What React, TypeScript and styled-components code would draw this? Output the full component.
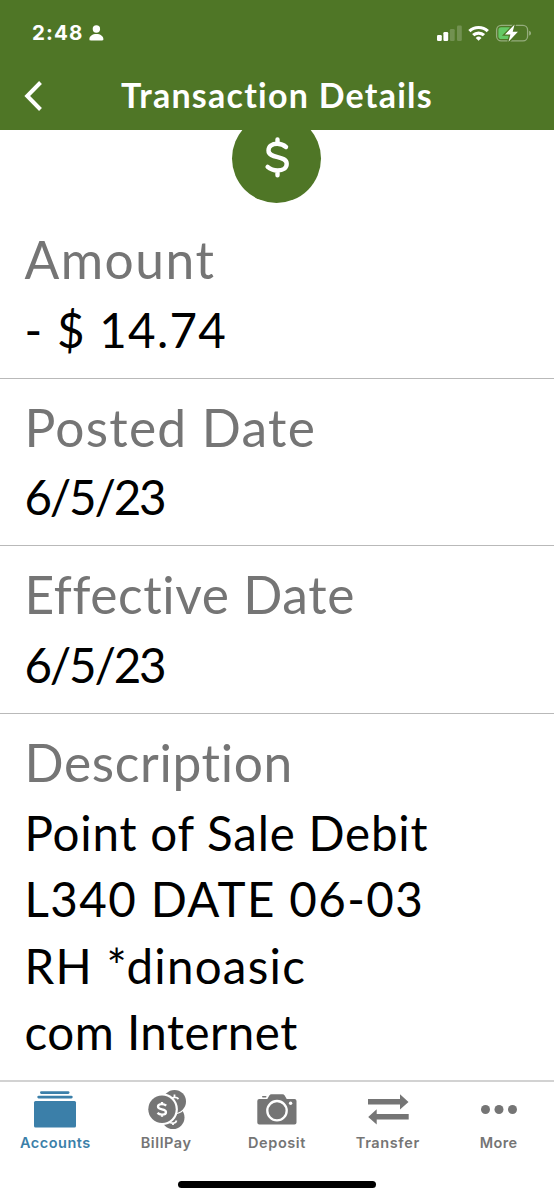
import React from "react";
import styled, { createGlobalStyle } from "styled-components";

const GREEN = "#4f7626";
const BLUE = "#3b7fa9";
const GREY = "#757575";

const GlobalStyle = createGlobalStyle`
  * { box-sizing: border-box; }
  body { margin: 0; background: #fff; }
`;

const Screen = styled.div`
  display: flex;
  flex-direction: column;
  width: 554px;
  height: 1200px;
  overflow: hidden;
  background: #fff;
  font-family: Lato, "Noto Sans", sans-serif;
`;

const Header = styled.header`
  flex: none;
  height: 130px;
  background: ${GREEN};
  color: #fff;
`;

const StatusBar = styled.div`
  display: flex;
  justify-content: space-between;
  align-items: center;
  height: 66px;
  padding: 0 23px 0 32px;
`;

const StatusGroup = styled.div`
  display: flex;
  align-items: center;
`;

const Clock = styled.span`
  width: 57px;
  font: 700 20.5px/24px Inter, sans-serif;
  letter-spacing: 1.1px;
`;

const TitleBar = styled.div`
  display: grid;
  grid-template-columns: 60px 1fr 60px;
  align-items: center;
  height: 57px;
`;

const BackButton = styled.button`
  display: flex;
  padding: 3px 0 0 24px;
  border: 0;
  background: none;
`;

const Title = styled.h1<{ $spacing: number }>`
  margin: 0;
  text-align: center;
  font-size: 34px;
  line-height: 57px;
  font-weight: 700;
  letter-spacing: ${(p) => p.$spacing}px;
  white-space: nowrap;
`;

const Hero = styled.div`
  flex: none;
  display: flex;
  justify-content: center;
  height: 81px;
  overflow: hidden;
`;

const Badge = styled.div`
  display: flex;
  align-items: center;
  justify-content: center;
  width: 89px;
  height: 89px;
  margin: -16.5px 1px 0 0;
  border-radius: 50%;
  background: ${GREEN};
`;

const Details = styled.main`
  flex: 1;
  min-height: 0;
`;

const Row = styled.section`
  height: 167.7px;
  padding: 15px 26px 0 24.5px;
  border-bottom: 1px solid #b9b9b9;
  &:last-child { height: auto; border: 0; }
`;

const Label = styled.div<{ $spacing: number }>`
  height: 70.7px;
  font-size: 51.5px;
  line-height: 66px;
  letter-spacing: ${(p) => p.$spacing}px;
  color: ${GREY};
  white-space: nowrap;
`;

const Value = styled.div<{ $spacing: number }>`
  font-size: 47.5px;
  line-height: 66.5px;
  letter-spacing: ${(p) => p.$spacing}px;
  color: #000;
  white-space: nowrap;
`;

const TabBar = styled.nav`
  flex: none;
  display: grid;
  grid-template-columns: repeat(5, 1fr);
  height: 101px;
  border-top: 2px solid #d2d2d2;
`;

const Tab = styled.a<{ $active?: boolean }>`
  display: flex;
  flex-direction: column;
  align-items: center;
  padding-top: 6px;
  color: ${(p) => (p.$active ? BLUE : GREY)};
  font: 600 14.5px/20px Inter, sans-serif;
`;

const TabLabel = styled.span<{ $spacing: number }>`
  margin-top: 3px;
  letter-spacing: ${(p) => p.$spacing}px;
`;

const HomeArea = styled.div`
  flex: none;
  display: flex;
  justify-content: center;
  height: 19px;
`;

const HomeIndicator = styled.div`
  width: 198px;
  height: 7px;
  border-radius: 4px;
  background: #000;
`;

const rows = [
  { label: "Amount", spacing: 1.5, lines: [{ text: "- $ 14.74", spacing: 1.3 }] },
  { label: "Posted Date", spacing: 1.25, lines: [{ text: "6/5/23", spacing: -2.2 }] },
  { label: "Effective Date", spacing: 0.6, lines: [{ text: "6/5/23", spacing: -2.2 }] },
  {
    label: "Description",
    spacing: 0.65,
    lines: [
      { text: "Point of Sale Debit", spacing: 0.8 },
      { text: "L340 DATE 06-03", spacing: 1.4 },
      { text: "RH *dinoasic", spacing: 1.25 },
      { text: "com Internet", spacing: 0.5 },
    ],
  },
];

const PersonIcon = () => (
  <svg width="15" height="16" viewBox="0 0 15 16" fill="#fff">
    <circle cx="7.4" cy="4" r="3.7" />
    <path d="M0.4 14.2C0.4 11 3.5 9 7.4 9s7 2 7 5.2c0 .8-.5 1.2-1.3 1.2H1.7c-.8 0-1.3-.4-1.3-1.2z" />
  </svg>
);

const StatusIcons = () => (
  <svg width="96" height="20" viewBox="435 23 96 20" fill="#fff">
    <rect x="437" y="35" width="4.8" height="6" rx="1.2" />
    <rect x="443.4" y="32" width="4.8" height="9" rx="1.2" />
    <rect x="449.9" y="29" width="4.8" height="12" rx="1.2" opacity=".2" />
    <rect x="457" y="25.5" width="4.8" height="15.5" rx="1.2" opacity=".2" />
    <g fill="none" stroke="#fff" strokeWidth="3.2">
      <path d="M469.4 31.2a13.3 13.3 0 0 1 18.4 0" />
      <path d="M473.2 35.200a7.800 7.800 0 0 1 10.800 0" />
    </g>
    <path d="M478.6 40.8l-2.9-2.9a4.2 4.2 0 0 1 5.8 0z" />
    <rect x="496.6" y="25.3" width="31" height="15.6" rx="4.6" fill="none" stroke="#fff" strokeOpacity=".4" strokeWidth="1.3" />
    <path d="M529.2 30.8c2.3.8 2.3 3.9 0 4.7z" opacity=".45" />
    <rect x="498.4" y="27.2" width="13" height="11.8" rx="2.8" fill="#64c864" />
    <path d="M514.6 24.6l-9.6 9.8h5.4l-1.9 7.4 9.4-10h-5.2z" stroke={GREEN} strokeWidth="2.6" paintOrder="stroke" />
  </svg>
);

const DollarIcon = () => (
  <svg width="26" height="44" viewBox="264.500 136.500 26 44" fill="none" stroke="#fff" strokeWidth="4.400" strokeLinecap="round">
    <path d="M286.500 147.500c-2.400-2.100-5.200-3.200-8.700-3.200-5.400 0-8.800 2.500-8.800 6.700 0 9 18.200 4.400 18.200 13.300 0 4.300-3.700 6.700-9.200 6.700-4 0-7.200-1.200-9.900-3.600M278 140v4M278 172v3.800" />
  </svg>
);

const AccountsIcon = () => (
  <svg width="44" height="42" viewBox="33 1088 44 42" fill="currentColor">
    <rect x="40" y="1091.2" width="29.5" height="2.7" rx="1.3" />
    <rect x="37.3" y="1095.7" width="35.4" height="2.7" rx="1.3" />
    <rect x="34" y="1101" width="42" height="26.6" rx="1.5" />
  </svg>
);

const BillPayIcon = () => (
  <svg width="44" height="42" viewBox="144 1088 44 42" fill="currentColor">
    <circle cx="173" cy="1117.5" r="11.5" />
    <path d="M170 1122.5c3 1.500 6 .5 6.500-2M173 1123v2" stroke="#fff" strokeWidth="1.8" fill="none" />
    <circle cx="174.5" cy="1101.5" r="11.5" stroke="#fff" strokeWidth="2.4" paintOrder="stroke" />
    <path d="M178.500 1099c-2-2-5-2-6.500-.5M174.500 1094.500v2.500" stroke="#fff" strokeWidth="1.8" fill="none" />
    <circle cx="162" cy="1109.2" r="13.7" stroke="#fff" strokeWidth="4.4" paintOrder="stroke" />
    <path d="M166.200 1105.700c-1.200-1.100-2.700-1.600-4.300-1.600-2.300 0-3.900 1-3.900 2.600 0 3.500 8 1.600 8 5.200 0 1.700-1.700 2.700-4.100 2.700-1.700 0-3.300-.6-4.400-1.700M162 1102v2M162 1114.500v2.300" stroke="#fff" strokeWidth="2.3" fill="none" />
  </svg>
);

const CameraIcon = () => (
  <svg width="44" height="42" viewBox="255 1088 44 42" fill="currentColor">
    <path d="M257.300 1101q0-2 2-2h8l2-3.500q.8-1.300 2.200-1.300h11q1.400 0 2.200 1.300l2 3.500h7.800q2 0 2 2v21.500q0 2-2 2h-35.200q-2 0-2-2z" />
    <rect x="262" y="1096" width="4.5" height="1.6" rx=".8" />
    <circle cx="277" cy="1110.7" r="9.7" fill="none" stroke="#fff" strokeWidth="2.3" />
    <circle cx="290.6" cy="1103.3" r="1.7" fill="#fff" />
  </svg>
);

const TransferIcon = () => (
  <svg width="44" height="42" viewBox="366 1088 44 42" fill="currentColor">
    <path d="M368 1099h32v-4.800l8.500 7.700-8.500 7.700v-5.100h-32zM408.700 1114h-32v-4.800l-8.500 7.700 8.500 7.700v-5.100h32z" />
  </svg>
);

const MoreIcon = () => (
  <svg width="44" height="42" viewBox="477 1088 44 42" fill="currentColor">
    <circle cx="485.5" cy="1109.5" r="4.5" />
    <circle cx="499" cy="1109.5" r="4.5" />
    <circle cx="512.5" cy="1109.5" r="4.5" />
  </svg>
);

const tabs = [
  { label: "Accounts", spacing: 0.5, Icon: AccountsIcon, active: true },
  { label: "BillPay", spacing: 0.6, Icon: BillPayIcon },
  { label: "Deposit", spacing: 0.6, Icon: CameraIcon },
  { label: "Transfer", spacing: 0.6, Icon: TransferIcon },
  { label: "More", spacing: 0.4, Icon: MoreIcon },
];

export default function App() {
  return (
    <Screen>
      <GlobalStyle />
      <Header>
        <StatusBar>
          <StatusGroup>
            <Clock>2:48</Clock>
            <PersonIcon />
          </StatusGroup>
          <StatusIcons />
        </StatusBar>
        <TitleBar>
          <BackButton aria-label="Back">
            <svg width="20" height="32" viewBox="0 0 20 32" fill="none" stroke="#fff" strokeWidth="4">
              <path d="M16.500 2.500L3.200 16l13.300 13.500" />
            </svg>
          </BackButton>
          <Title $spacing={1.25}>Transaction Details</Title>
        </TitleBar>
      </Header>
      <Hero>
        <Badge>
          <DollarIcon />
        </Badge>
      </Hero>
      <Details>
        {rows.map((row) => (
          <Row key={row.label}>
            <Label $spacing={row.spacing}>{row.label}</Label>
            {row.lines.map((line) => (
              <Value key={line.text} $spacing={line.spacing}>
                {line.text}
              </Value>
            ))}
          </Row>
        ))}
      </Details>
      <TabBar>
        {tabs.map(({ label, spacing, Icon, active }) => (
          <Tab key={label} $active={active}>
            <Icon />
            <TabLabel $spacing={spacing}>{label}</TabLabel>
          </Tab>
        ))}
      </TabBar>
      <HomeArea>
        <HomeIndicator />
      </HomeArea>
    </Screen>
  );
}
